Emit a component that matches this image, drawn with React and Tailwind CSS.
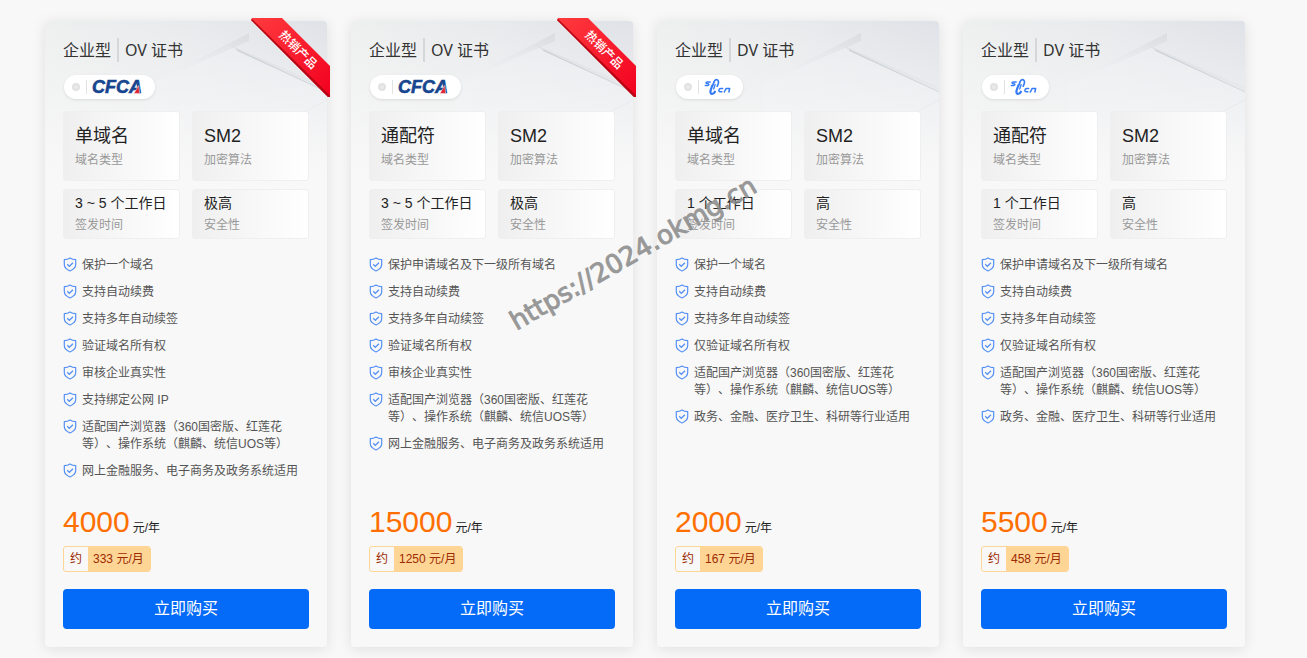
import React from "react";

const adapt = "适配国产浏览器（360国密版、红莲花等）、操作系统（麒麟、统信UOS等）";
const finance = "网上金融服务、电子商务及政务系统适用";
const government = "政务、金融、医疗卫生、科研等行业适用";

const plans = [
  {
    id: "ov-single",
    type: "OV 证书",
    brand: "cfca",
    hot: true,
    specs: [["单域名", "域名类型"], ["SM2", "加密算法"], ["3 ~ 5 个工作日", "签发时间"], ["极高", "安全性"]],
    features: ["保护一个域名", "支持自动续费", "支持多年自动续签", "验证域名所有权", "审核企业真实性", "支持绑定公网 IP", adapt, finance],
    price: "4000",
    monthly: "333",
  },
  {
    id: "ov-wildcard",
    type: "OV 证书",
    brand: "cfca",
    hot: true,
    specs: [["通配符", "域名类型"], ["SM2", "加密算法"], ["3 ~ 5 个工作日", "签发时间"], ["极高", "安全性"]],
    features: ["保护申请域名及下一级所有域名", "支持自动续费", "支持多年自动续签", "验证域名所有权", "审核企业真实性", adapt, finance],
    price: "15000",
    monthly: "1250",
  },
  {
    id: "dv-single",
    type: "DV 证书",
    brand: "sheca",
    hot: false,
    specs: [["单域名", "域名类型"], ["SM2", "加密算法"], ["1 个工作日", "签发时间"], ["高", "安全性"]],
    features: ["保护一个域名", "支持自动续费", "支持多年自动续签", "仅验证域名所有权", adapt, government],
    price: "2000",
    monthly: "167",
  },
  {
    id: "dv-wildcard",
    type: "DV 证书",
    brand: "sheca",
    hot: false,
    specs: [["通配符", "域名类型"], ["SM2", "加密算法"], ["1 个工作日", "签发时间"], ["高", "安全性"]],
    features: ["保护申请域名及下一级所有域名", "支持自动续费", "支持多年自动续签", "仅验证域名所有权", adapt, government],
    price: "5500",
    monthly: "458",
  },
];

function ShieldIcon() {
  return (
    <svg className="h-[15px] w-[14px] shrink-0" viewBox="0 0 14 15" fill="none" stroke="#5590f5" aria-hidden="true">
      <path d="M7 1C5.400 2.200 3.400 2.700 1.300 2.700V7.600C1.300 10.700 3.500 12.600 7 14C10.500 12.600 12.700 10.700 12.700 7.600V2.700C10.600 2.700 8.600 2.200 7 1Z" strokeWidth="1.2" strokeLinejoin="round" />
      <path d="M4.200 7.300L6.300 9.300L10 5.700" strokeWidth="1.200" />
    </svg>
  );
}

function CfcaLogo() {
  return (
    <svg className="h-6 w-[52px] overflow-visible" viewBox="0 0 52 24" role="img" aria-label="CFCA">
      <text x="0" y="18" className="font-['Liberation_Sans',sans-serif] text-[18px] font-bold italic" fill="#17468f" stroke="#17468f" strokeWidth="0.6">CFCA</text>
      <path d="M41.800 18.400L46.800 10.500L47.600 18.400Z" fill="#e02331" stroke="#fff" strokeWidth="0.5" />
    </svg>
  );
}

function ShecaLogo() {
  return (
    <svg className="h-[18px] w-7" viewBox="0 0 28 18" role="img" aria-label="SHECA" fill="none" stroke="#347bf6" strokeLinecap="round" strokeLinejoin="round">
      <path d="M6.200 4H3Q1.900 4 2 4.900Q2.100 5.700 3.400 5.700Q5 5.700 4.900 6.600Q4.800 7.500 3.600 7.500H1.300" strokeWidth="1.300" />
      <path d="M8.900 7L10.200 3.400Q11.800 1 13.500 1.900Q15 3 14.200 5.600L13.200 8.200" strokeWidth="1.700" />
      <path d="M8.300 7.500L6.600 12.300Q5.900 15.500 7.900 15.900Q9.900 16 10.900 13.700" strokeWidth="2.200" />
      <path d="M11.100 6.500L9.700 11" strokeWidth="1.300" />
      <path d="M18.600 10.400H16.900Q15.200 10.400 14.900 12.100Q14.700 13.800 16.200 13.800H17.900M20.300 14L22.200 10.400H25.700L24.900 14" strokeWidth="1.500" />
    </svg>
  );
}

function Backdrop() {
  return (
    <svg className="absolute inset-x-0 top-0 h-[150px] w-full" viewBox="0 0 282 150" preserveAspectRatio="none" aria-hidden="true">
      <defs>
        <linearGradient id="sky" x1="0" y1="0" x2="1" y2="0">
          <stop offset="0" stopColor="#eeefef" />
          <stop offset="0.5" stopColor="#e8eaec" />
          <stop offset="1" stopColor="#dfe2e7" />
        </linearGradient>
        <linearGradient id="fade" x1="0" y1="0" x2="0" y2="1">
          <stop offset="0" stopColor="#f8f8f8" stopOpacity="0" />
          <stop offset="1" stopColor="#f8f8f8" />
        </linearGradient>
        <linearGradient id="roof" x1="1" y1="0" x2="0" y2="1">
          <stop offset="0" stopColor="#d3d7dc" stopOpacity="0.8" />
          <stop offset="1" stopColor="#e4e7ea" stopOpacity="0" />
        </linearGradient>
        <linearGradient id="wall" x1="0.5" y1="0" x2="0.5" y2="1">
          <stop offset="0" stopColor="#eceef1" />
          <stop offset="1" stopColor="#eef0f4" />
        </linearGradient>
      </defs>
      <rect width="282" height="150" fill="url(#sky)" />
      <path d="M105 63L185 24L282 68V150H105Z" fill="url(#wall)" opacity="0.5" />
      <path d="M105 63L204 12V20L188 27Z" fill="url(#roof)" />
      <path d="M185 24L282 66V71L194 31Z" fill="#d9dde1" />
      <path d="M192 29L282 71" stroke="#b9c0c6" strokeWidth="1" />
      <path d="M255 93L282 79" stroke="#d5d9de" strokeWidth="1" />
      <rect width="282" height="150" fill="url(#fade)" />
    </svg>
  );
}

function HotRibbon() {
  return (
    <svg className="absolute -top-[3px] -right-[3px] h-20 w-[79px]" viewBox="0 0 79 80" role="img" aria-label="热销产品">
      <defs>
        <linearGradient id="ribbon" x1="0" y1="0" x2="1" y2="1">
          <stop offset="0" stopColor="#ff3b3e" />
          <stop offset="1" stopColor="#f2001f" />
        </linearGradient>
      </defs>
      <path d="M1 0H31L79 48V79H77L0 2Z" fill="url(#ribbon)" />
      <path d="M1 1L79 77.500V79H77L0 2Z" fill="#b60614" />
      <text x="47" y="36" transform="rotate(45 47 32)" textAnchor="middle" fill="#fff" className="font-['Noto_Sans_CJK_SC',sans-serif] text-[12px] font-medium">热销产品</text>
    </svg>
  );
}

function Spec({ value, label, large }) {
  return (
    <div className={`flex flex-col-reverse rounded-[3px] border border-[#efefef] bg-linear-to-r from-[#efefef] to-white pl-[11px] ${large ? "h-[70px] justify-end gap-[2px] pt-3" : "h-[50px] justify-center gap-[2px]"}`}>
      <dt className="text-[12px] leading-5 text-[#999]">{label}</dt>
      <dd className={`whitespace-nowrap text-[#222] ${large ? "text-[18px] leading-6" : "text-[14px] leading-5"}`}>{value}</dd>
    </div>
  );
}

function PlanCard({ plan }) {
  return (
    <article className="relative flex flex-col rounded-[4px] bg-[#f8f8f8] px-[18px] pt-[17px] pb-[18px] shadow-[0_2px_14px_rgba(0,0,0,0.1)]">
      <div className="absolute inset-0 overflow-hidden rounded-[4px]">
        <Backdrop />
      </div>
      {plan.hot && <HotRibbon />}
      <div className="relative flex flex-1 flex-col">
        <h2 className="flex h-6 items-center font-['Noto_Sans','Noto_Sans_CJK_SC',sans-serif] text-[16px] leading-6 text-[#333]">
          <span>企业型</span>
          <span className="mx-[6px] h-6 w-[2px] bg-[#d5d7d9]" />
          <span>{plan.type}</span>
        </h2>
        <div className="mt-[13px] ml-px flex h-6 items-center self-start rounded-full bg-white pr-[11px] pl-2 shadow-[0_1px_3px_rgba(0,0,0,0.1)]">
          <span className="size-2 rounded-full border-2 border-[#e2e2e2] bg-[#eaeaea]" />
          <span className="mr-[5px] ml-[6px] h-[14px] w-px bg-[#e2e2e2]" />
          {plan.brand === "cfca" ? <CfcaLogo /> : <ShecaLogo />}
        </div>
        <dl className="mt-3 grid grid-cols-2 gap-x-3 gap-y-2">
          {plan.specs.map(([value, label], i) => (
            <Spec key={label} value={value} label={label} large={i < 2} />
          ))}
        </dl>
        <ul className="mt-[18px] flex flex-1 flex-col gap-[10px]">
          {plan.features.map((text) => (
            <li key={text} className="flex gap-[5px] text-[12px] leading-[17px] text-[#555] [text-spacing-trim:space-all]">
              <ShieldIcon />
              <span>{text}</span>
            </li>
          ))}
        </ul>
        <p className="mt-6 flex items-baseline gap-[3px] leading-9">
          <span className="text-[30px] text-[#ff6f00]">{plan.price}</span>
          <span className="text-[12px] text-[#222]">元/年</span>
        </p>
        <p className="flex h-[26px] self-start overflow-hidden rounded-[3px] border border-[#ffd596] text-[12px] leading-6 text-[#9c2a00]">
          <span className="px-[6px]">约</span>
          <span className="bg-[#ffd596] pr-[6px] pl-[5px]">{plan.monthly} 元/月</span>
        </p>
        <button type="button" className="mt-[17px] h-10 cursor-pointer rounded-[4px] bg-[#046af8] text-[16px] text-white">
          立即购买
        </button>
      </div>
    </article>
  );
}

export default function App() {
  return (
    <main className="relative min-h-screen overflow-hidden bg-[#f8f8f8] pt-[21px] pr-[62px] pb-[11px] pl-[45px] font-['Liberation_Sans','Noto_Sans_CJK_SC',sans-serif]">
      <div className="grid grid-cols-4 gap-6">
        {plans.map((plan) => (
          <PlanCard key={plan.id} plan={plan} />
        ))}
      </div>
      <div className="pointer-events-none absolute top-[237px] left-[483px] w-[300px] -rotate-30 text-center font-['DejaVu_Sans',sans-serif] text-[26px] leading-8 whitespace-nowrap text-[#888] opacity-85 [-webkit-text-stroke:1px_#888]">
        https://2024.okmg.cn
      </div>
    </main>
  );
}
